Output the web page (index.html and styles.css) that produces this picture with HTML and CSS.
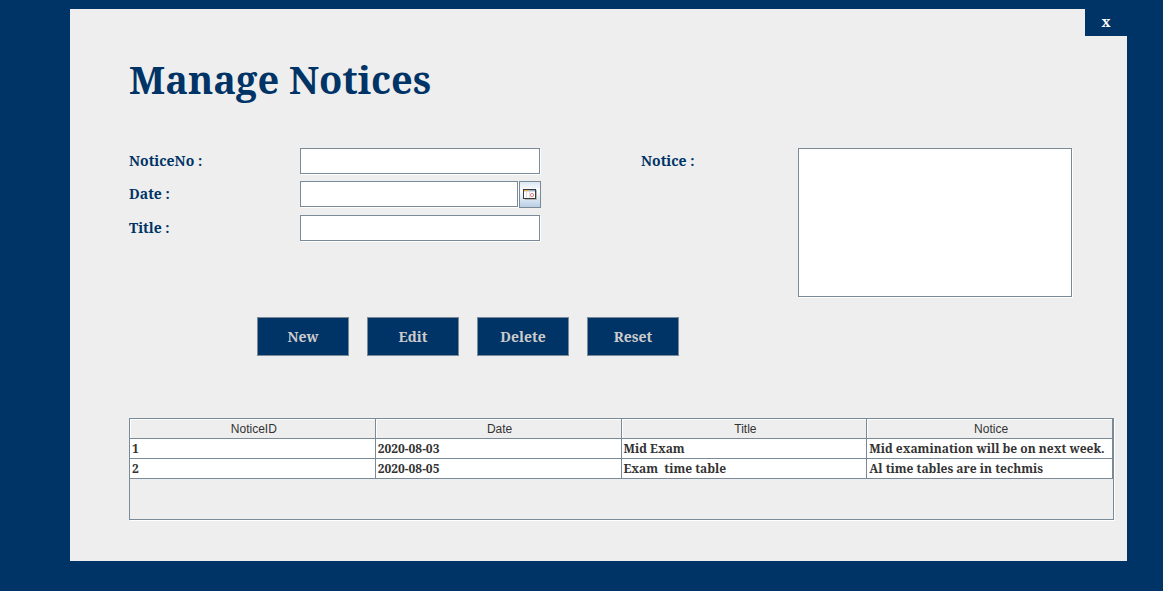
FILE: index.html
```html
<!DOCTYPE html>
<html lang="en">
<head>
<meta charset="utf-8">
<meta name="viewport" content="width=device-width, initial-scale=1">
<title>Manage Notices</title>
<link rel="stylesheet" href="styles.css">
</head>
<body>
<main class="panel">
  <div class="titlebar"><button class="close" type="button" aria-label="Close">x</button></div>
  <div class="content">
    <h1 class="heading">Manage Notices</h1>
    <form class="form">
      <div class="fields">
        <label for="notice-no">NoticeNo :</label>
        <input class="field" id="notice-no" type="text">
        <label for="date">Date :</label>
        <div class="date">
          <input class="field" id="date" type="text">
          <button class="picker" type="button" aria-label="Choose date">
            <svg width="14" height="11" viewBox="0 0 14 11" aria-hidden="true">
              <path d="M2 10.500H13.500V1" fill="none" stroke="#b4b4b4"/>
              <rect width="13" height="10" fill="#3a3a3a"/>
              <rect x="1" y="1" width="11" height="8" fill="#fff"/>
              <rect x="1" y="1" width="5" height="1" fill="#f0b050"/>
              <rect x="6" y="1" width="6" height="1" fill="#8db3e2"/>
              <path d="M1 2.500H12M3.500 3V9M6.500 3V9" stroke="#dcdcdc"/>
              <rect x="7.500" y="4.500" width="3" height="3" rx="1" fill="#fff" stroke="#ee6666"/>
            </svg>
          </button>
        </div>
        <label for="title">Title :</label>
        <input class="field" id="title" type="text">
      </div>
      <div class="notice">
        <label for="notice">Notice :</label>
        <textarea class="field notice-text" id="notice"></textarea>
      </div>
    </form>
    <div class="actions">
      <button class="action" type="button">New</button>
      <button class="action" type="button">Edit</button>
      <button class="action" type="button">Delete</button>
      <button class="action" type="button">Reset</button>
    </div>
    <div class="table-view">
      <table class="notices">
        <thead><tr><th>NoticeID</th><th>Date</th><th>Title</th><th>Notice</th></tr></thead>
        <tbody>
          <tr><td>1</td><td>2020-08-03</td><td>Mid Exam</td><td>Mid examination will be on next week.</td></tr>
          <tr><td>2</td><td>2020-08-05</td><td>Exam&nbsp; time table</td><td>Al time tables are in techmis</td></tr>
        </tbody>
      </table>
    </div>
  </div>
</main>
</body>
</html>
```
FILE: styles.css
```css
:root {
  --navy: #003366;
  --line: #7a8a99;
  --panel: #eeeeee;
  --serif: "Droid Serif", "Noto Serif", "DejaVu Serif Condensed", "DejaVu Serif", serif;
}

* { box-sizing: border-box; }

body {
  margin: 0;
  padding: 9px 36px 30px 70px;
  background: var(--navy);
  color: #333;
  font-family: var(--serif);
}

button, input, textarea { font: inherit; }

.panel { background: var(--panel); }

.titlebar { display: flex; justify-content: flex-end; }

.close {
  width: 42px;
  height: 27px;
  padding: 0 0 2px;
  border: 0;
  background: var(--navy);
  color: #fff;
  font-size: 14px;
  font-weight: bold;
}

.content { padding: 18px 13px 41px 59px; }

.heading {
  margin: 0;
  color: var(--navy);
  font-size: 38px;
  line-height: 50px;
}

.form {
  display: grid;
  grid-template-columns: 411fr 431fr;
  gap: 101px;
  margin: 44px 42px 0 0;
  color: var(--navy);
  font-size: 14px;
  font-weight: bold;
  line-height: 26px;
}

.fields {
  display: grid;
  grid-template-columns: 171px 1fr;
  gap: 7px 0;
  align-content: start;
}

.notice {
  display: grid;
  grid-template-columns: 157px 1fr;
}

.field {
  width: 100%;
  min-width: 0;
  height: 26px;
  padding: 2px;
  border: 1px solid var(--line);
  border-radius: 0;
  background: #fff;
  box-shadow: 1px 1px 0 #fff;
}

.notice-text { display: block; height: 149px; resize: none; }

.date { display: flex; gap: 1px; margin-right: -1px; }

.picker {
  display: flex;
  flex: 0 0 22px;
  align-items: center;
  justify-content: center;
  height: 27px;
  padding: 0;
  border: 1px solid var(--line);
  background: linear-gradient(#dde8f3, #fff 35%, #b8cfe5);
}

.actions {
  display: flex;
  gap: 18px;
  margin: 20px 0 0 128px;
}

.action {
  width: 92px;
  height: 39px;
  padding: 0;
  border: 1px solid var(--line);
  background: var(--navy);
  color: #ccc;
  font-size: 14px;
  font-weight: bold;
}

.table-view {
  min-height: 102px;
  margin-top: 62px;
  border: 1px solid var(--line);
  box-shadow: 1px 1px 0 #fff;
}

.notices {
  width: 100%;
  table-layout: fixed;
  border-collapse: separate;
  border-spacing: 0;
  font-size: 12px;
  font-weight: bold;
  line-height: 19px;
}

.notices th, .notices td {
  height: 20px;
  padding: 0 0 0 2px;
  border: solid var(--line);
  border-width: 0 1px 1px 0;
  white-space: nowrap;
}

.notices th {
  padding: 2px 0 0 3px;
  box-shadow: inset 1px 1px 0 #fff;
  font-family: "Liberation Sans", Arial, sans-serif;
  font-weight: normal;
  line-height: 17px;
}

.notices td { background: #fff; }
```
